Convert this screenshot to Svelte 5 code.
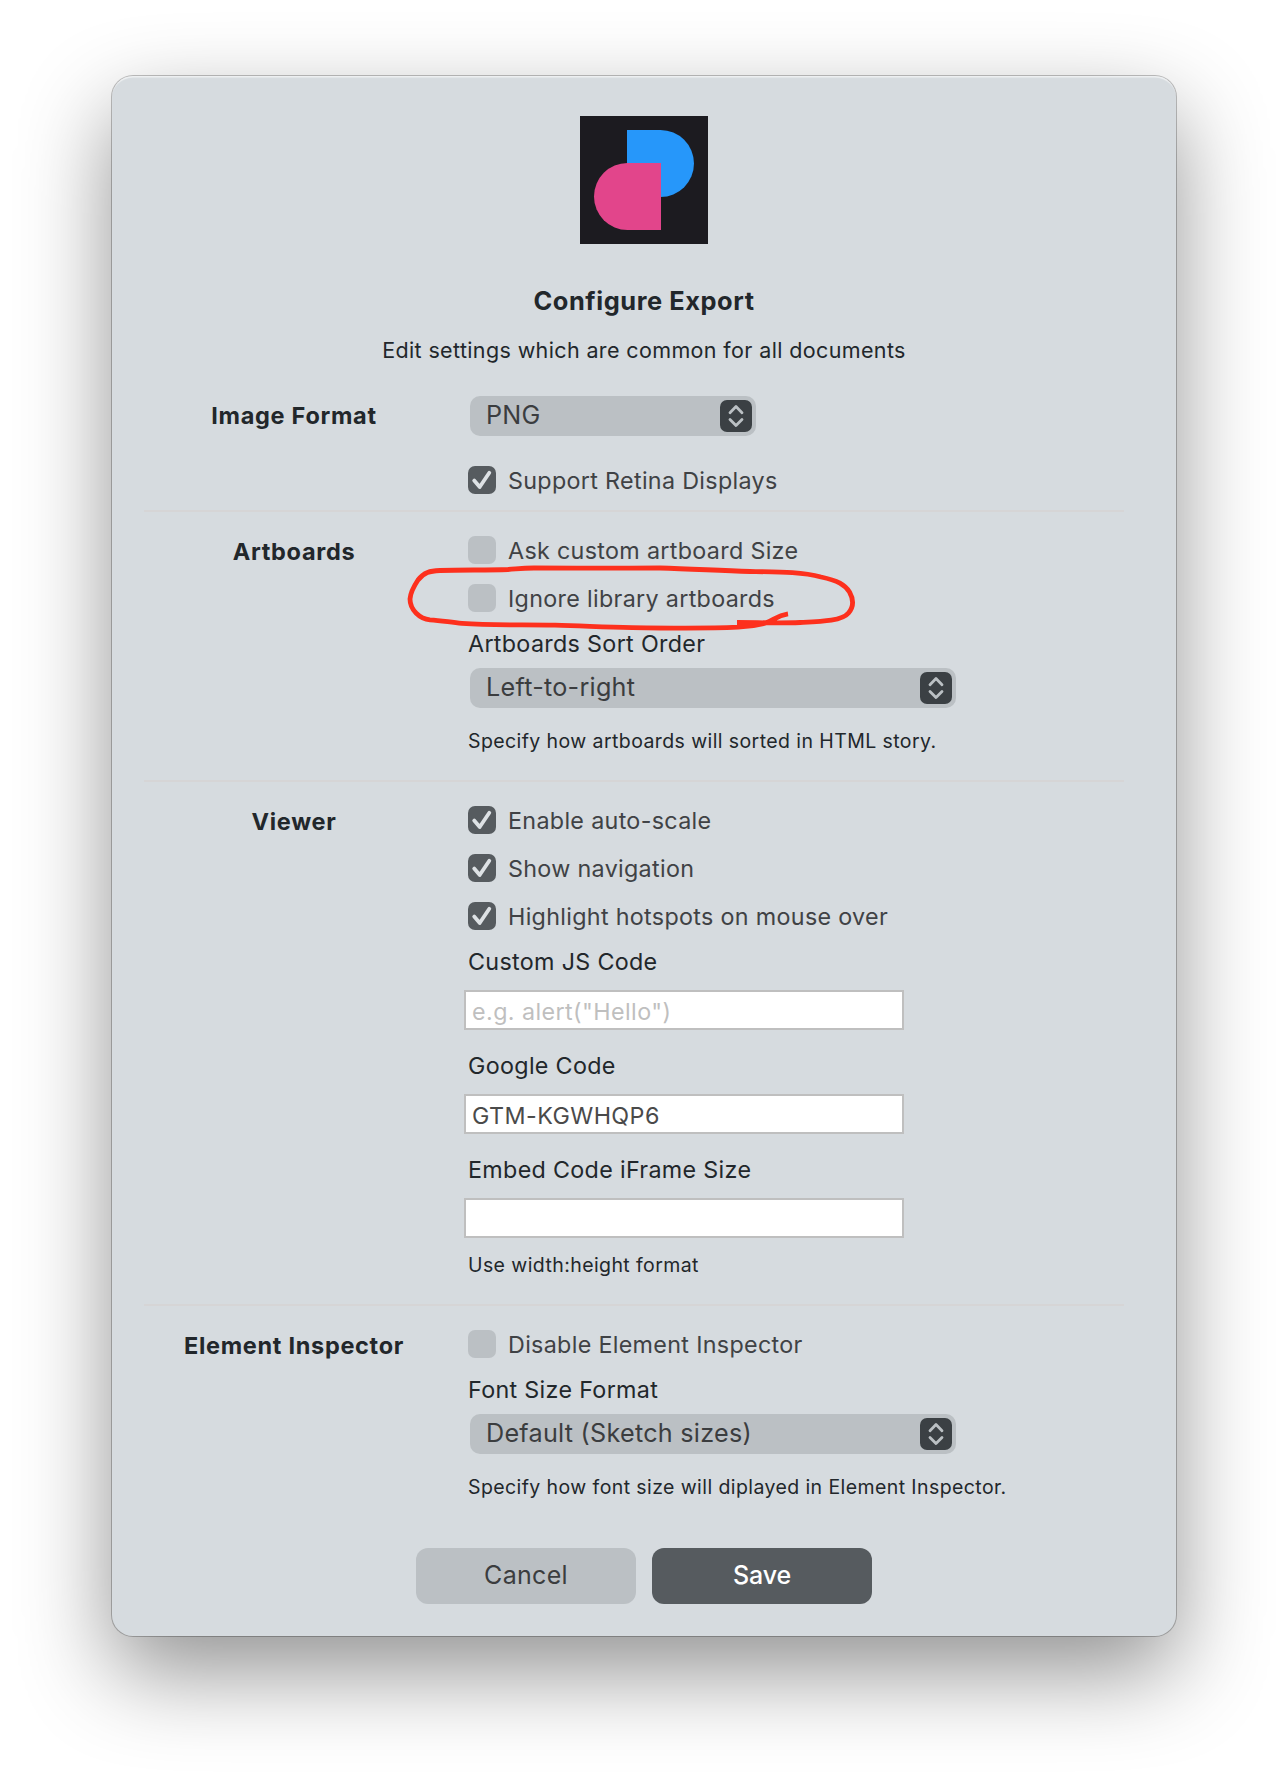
<script>
  let retina = $state(true);
  let askSize = $state(false);
  let ignoreLibrary = $state(false);
  let autoScale = $state(true);
  let navigation = $state(true);
  let hotspots = $state(true);
  let disableInspector = $state(false);
  let customJs = $state('');
  let googleCode = $state('GTM-KGWHQP6');
  let frameSize = $state('');
</script>

{#snippet checkbox(text, checked, toggle)}
  <button class="check" type="button" role="checkbox" aria-checked={checked} onclick={toggle}>
    <span class="box" class:on={checked}>
      {#if checked}
        <svg viewBox="0 0 28 28" width="28" height="28">
          <path d="M6.2 14.6 L11.7 21 L21.3 6.8" />
        </svg>
      {/if}
    </span>
    <span class="check-text">{text}</span>
  </button>
{/snippet}

{#snippet popup(value, narrow)}
  <div class="select" class:narrow>
    <span>{value}</span>
    <svg class="knob" viewBox="0 0 32 32" width="32" height="32">
      <path d="M10 12.7 L16 6.6 L22 12.7 M10 19.5 L16 25.6 L22 19.5" />
    </svg>
  </div>
{/snippet}

<div class="page">
  <main class="dialog">
    <svg class="logo" viewBox="0 0 128 128" width="128" height="128">
      <rect width="128" height="128" fill="#1c1b20" />
      <path d="M47 14H80.5A33.5 33.5 0 0 1 80.5 81H47Z" fill="#2697fa" />
      <path d="M81 47H47.5A33.5 33.5 0 0 0 47.5 114H81Z" fill="#e2458b" />
    </svg>
    <h1>Configure Export</h1>
    <p class="subtitle">Edit settings which are common for all documents</p>

    <section class="first">
      <h2>Image Format</h2>
      <div class="fields">
        {@render popup('PNG', true)}
        <div class="retina">
          {@render checkbox('Support Retina Displays', retina, () => (retina = !retina))}
        </div>
      </div>
    </section>

    <section>
      <h2>Artboards</h2>
      <div class="fields">
        <div class="checks">
          {@render checkbox('Ask custom artboard Size', askSize, () => (askSize = !askSize))}
          <div class="marked">
            {@render checkbox('Ignore library artboards', ignoreLibrary, () => (ignoreLibrary = !ignoreLibrary))}
            <svg class="scribble" viewBox="400 560 460 75" width="460" height="75">
              <path
                d="M788 613.8 C776 615.5 774 620.5 765 623.2 C755 626 748 626.8 738 627.2 C706 628.6 668 628.2 632 627.6 C600 627 580 625.6 555 625.2 C520 624.6 492 625.6 462 623.4 C450 622.4 442 620.4 430 619.8 C420 619 410 610 410 599 C410.5 592 414 586 418 580 C424 572 430 571 440 570.5 C462 569.6 486 570.4 508 569.5 C518 568.8 522 568 534 568 C576 568 620 568.4 660 568 C690 568.8 716 570.4 750 571.5 C782 572 802 572 821 577 C838 580.5 845 585 849.5 592 C854 600 853.5 607 848.5 613 C842 621 822 621.5 800 622.5 C778 623.4 758 622.5 737 622.5"
              />
            </svg>
          </div>
        </div>
        <div class="label">Artboards Sort Order</div>
        {@render popup('Left-to-right', false)}
        <p class="hint">Specify how artboards will sorted in HTML story.</p>
      </div>
    </section>

    <section>
      <h2>Viewer</h2>
      <div class="fields">
        <div class="checks">
          {@render checkbox('Enable auto-scale', autoScale, () => (autoScale = !autoScale))}
          {@render checkbox('Show navigation', navigation, () => (navigation = !navigation))}
          {@render checkbox('Highlight hotspots on mouse over', hotspots, () => (hotspots = !hotspots))}
        </div>
        <label class="label" for="js">Custom JS Code</label>
        <input id="js" placeholder={'e.g. alert("Hello")'} bind:value={customJs} />
        <label class="label spaced" for="google">Google Code</label>
        <input id="google" bind:value={googleCode} />
        <label class="label spaced" for="frame">Embed Code iFrame Size</label>
        <input id="frame" bind:value={frameSize} />
        <p class="hint tight">Use width:height format</p>
      </div>
    </section>

    <section>
      <h2>Element Inspector</h2>
      <div class="fields">
        <div class="checks">
          {@render checkbox('Disable Element Inspector', disableInspector, () => (disableInspector = !disableInspector))}
        </div>
        <div class="label">Font Size Format</div>
        {@render popup('Default (Sketch sizes)', false)}
        <p class="hint">Specify how font size will diplayed in Element Inspector.</p>
      </div>
    </section>

    <footer>
      <button class="action" type="button">Cancel</button>
      <button class="action primary" type="button">Save</button>
    </footer>
  </main>
</div>

<style>
  :global(body) {
    background: #fff;
  }

  .page {
    box-sizing: border-box;
    height: 1784px;
    padding-top: 76px;
    overflow: hidden;
    background: #fff;
  }

  .dialog {
    box-sizing: border-box;
    display: flex;
    flex-direction: column;
    width: 1064px;
    height: 1560px;
    margin: 0 auto;
    padding: 40px 52px 0 32px;
    border-radius: 21px;
    background: #d6dbdf;
    box-shadow:
      inset 0 2px 1px -0.5px rgba(255, 255, 255, 0.6),
      0 0 0 1px rgba(0, 0, 0, 0.24),
      0 36px 90px rgba(0, 0, 0, 0.43);
    color: #22272b;
    font-family: Inter, 'Liberation Sans', sans-serif;
    font-size: 23.3px;
    letter-spacing: 0.32px;
    white-space: nowrap;
  }

  .logo {
    display: block;
    align-self: center;
    margin-left: 20px;
    flex: none;
  }

  h1,
  .subtitle {
    margin-left: 20px;
    text-align: center;
    margin-bottom: 0;
  }

  h1 {
    margin-top: 42px;
    font-size: 25.4px;
    line-height: 30px;
    font-weight: 700;
    letter-spacing: 0.57px;
  }

  .subtitle {
    margin-top: 21px;
    font-size: 21.5px;
    line-height: 26px;
    letter-spacing: 0.37px;
  }

  section {
    display: grid;
    grid-template-columns: 300px 1fr;
    column-gap: 24px;
    padding: 24px 0 27px;
    border-top: 2px solid #d6d5d6;
  }

  section.first {
    padding: 33px 0 16px;
    border-top: 0;
  }

  h2 {
    margin: 0;
    padding-top: 2px;
    font-size: 23.5px;
    line-height: 28px;
    font-weight: 700;
    letter-spacing: 0.7px;
    text-align: center;
  }

  .first h2 {
    padding-top: 6px;
  }

  .fields {
    display: flex;
    flex-direction: column;
    align-items: flex-start;
  }

  .checks {
    display: flex;
    flex-direction: column;
    gap: 20px;
  }

  .retina {
    margin-top: 30px;
  }

  .check {
    display: flex;
    align-items: center;
    gap: 12px;
    height: 28px;
    padding: 0;
    border: 0;
    background: none;
    color: #404245;
    font: inherit;
    letter-spacing: inherit;
    line-height: 28px;
  }

  .check-text {
    padding-top: 2px;
  }

  .box {
    width: 28px;
    height: 28px;
    border-radius: 7px;
    background: #bbc0c4;
  }

  .box.on {
    background: #565b5f;
  }

  .box svg {
    display: block;
  }

  .box path {
    fill: none;
    stroke: #dde1e4;
    stroke-width: 3.8;
    stroke-linecap: round;
    stroke-linejoin: round;
  }

  .marked {
    position: relative;
  }

  .scribble {
    position: absolute;
    left: -68px;
    top: -24px;
    pointer-events: none;
  }

  .scribble path {
    fill: none;
    stroke: #fd301d;
    stroke-width: 4.8;
    stroke-linejoin: round;
  }

  .label {
    margin-top: 18px;
    line-height: 28px;
  }

  .label.spaced {
    margin-top: 22px;
  }

  .select {
    box-sizing: border-box;
    display: flex;
    align-items: center;
    justify-content: space-between;
    width: 486px;
    height: 40px;
    margin: 10px 0 0 2px;
    padding: 0 4px 0 16px;
    border-radius: 10px;
    background: #bbc0c4;
    color: #3b3d3f;
    font-size: 25.2px;
    line-height: 38px;
    letter-spacing: 0.25px;
  }

  .select span {
    padding-bottom: 2px;
  }

  .select.narrow {
    width: 286px;
    margin-top: 0;
  }

  .knob {
    border-radius: 7px;
    background: #3b4044;
  }

  .knob path {
    fill: none;
    stroke: #bbc0c4;
    stroke-width: 2.8;
    stroke-linecap: round;
    stroke-linejoin: round;
  }

  input {
    box-sizing: border-box;
    width: 440px;
    height: 40px;
    margin: 14px 0 0 -4px;
    padding: 2px 6px 0;
    border: 2px solid #bfbfbf;
    border-radius: 0;
    outline: 0;
    background: #fff;
    color: #4a4a4a;
    font: inherit;
    letter-spacing: 0.42px;
  }

  input::placeholder {
    color: #bfbfbf;
    opacity: 1;
  }

  .hint {
    margin: 21px 0 0;
    font-size: 19.5px;
    line-height: 24px;
    letter-spacing: 0.41px;
  }

  .hint.tight {
    margin-top: 15px;
  }

  footer {
    display: flex;
    gap: 16px;
    margin: 22px 0 0 272px;
  }

  .action {
    width: 220px;
    height: 56px;
    padding: 0 0 2px;
    border: 0;
    border-radius: 12px;
    background: #bbc0c4;
    color: #3b3d3f;
    font: 400 25px Inter, 'Liberation Sans', sans-serif;
    letter-spacing: 0.31px;
  }

  .action.primary {
    background: #565b5f;
    color: #fff;
    font-weight: 500;
    letter-spacing: -0.1px;
  }
</style>
